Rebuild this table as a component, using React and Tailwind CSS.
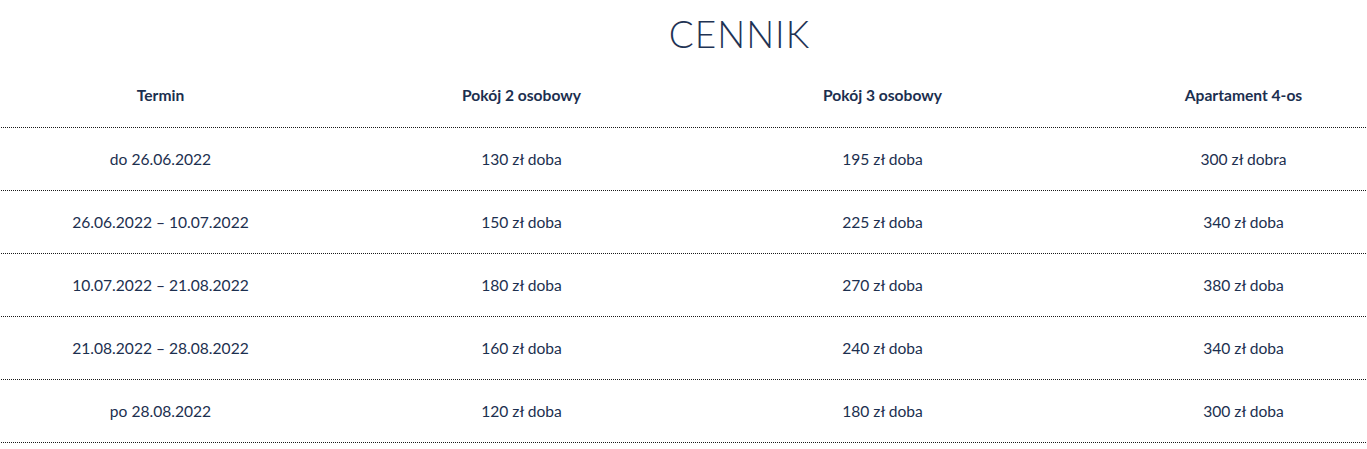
import React from "react";

const rows = [
  ["do 26.06.2022", "130 zł doba", "195 zł doba", "300 zł dobra"],
  ["26.06.2022 – 10.07.2022", "150 zł doba", "225 zł doba", "340 zł doba"],
  ["10.07.2022 – 21.08.2022", "180 zł doba", "270 zł doba", "380 zł doba"],
  ["21.08.2022 – 28.08.2022", "160 zł doba", "240 zł doba", "340 zł doba"],
  ["po 28.08.2022", "120 zł doba", "180 zł doba", "300 zł doba"],
];

const headers = ["Termin", "Pokój 2 osobowy", "Pokój 3 osobowy", "Apartament 4-os"];

const App = () => {
  return (
    <div className="w-[1367px] h-[449px] bg-white overflow-hidden font-['Lato','Liberation_Sans',sans-serif] text-[#1c2f4f]">
      {/* Title */}
      <div className="h-[67px] pt-[12px] pl-[112px] text-center">
        <h1 className="text-[37px] leading-[44px] font-light tracking-[1px] text-[#1f3354]">
          CENNIK
        </h1>
      </div>

      {/* Table */}
      <div className="w-full overflow-hidden">
        <div className="w-[1444px] -ml-[20px]">
          <div className="grid grid-cols-4 h-[61px] pb-[2px] border-b border-dotted border-[#1a1a1a]">
            {headers.map((h, i) => (
              <div key={i} className="flex items-center justify-center text-[15.6px] font-bold">
                {h}
              </div>
            ))}
          </div>
          {rows.map((row, r) => (
            <div key={r} className="grid grid-cols-4 h-[63px] pt-[2px] border-b border-dotted border-[#1a1a1a]">
              {row.map((cell, c) => (
                <div key={c} className="flex items-center justify-center text-[15.6px]">
                  {cell}
                </div>
              ))}
            </div>
          ))}
        </div>
      </div>
    </div>
  );
};

export default App;
